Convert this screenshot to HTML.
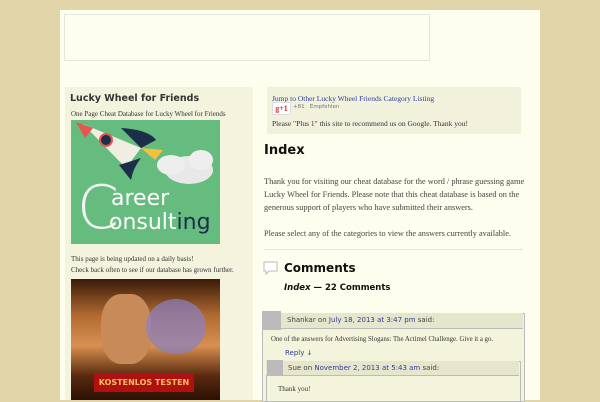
<!DOCTYPE html>
<html><head><style>
body{margin:0;width:600px;height:400px;overflow:hidden;background:#e3d5aa;font-family:"Liberation Serif",serif;}
#w{position:absolute;left:60px;top:10px;width:480px;height:390px;background:#fefeee;}
.a{position:absolute}
.sans{font-family:"DejaVu Sans","Liberation Sans",sans-serif}
a{color:#2c3fa0;text-decoration:none}
</style></head><body>
<div id="w"></div>
<div class="a" style="left:64px;top:14px;width:364px;height:45px;border:1px solid #e6e6dc;"></div>
<div class="a" style="left:65px;top:87px;width:188px;height:313px;background:#f3f3de;"></div>
<div class="a sans" style="left:70px;top:93px;font-size:9.5px;font-weight:bold;color:#333;">Lucky Wheel for Friends</div>
<div class="a" style="left:71px;top:110px;font-size:7px;color:#333;">One Page Cheat Database for Lucky Wheel for Friends</div>
<div class="a" style="left:71px;top:120px;width:149px;height:124px;background:#66bb7f;overflow:hidden;">
<svg width="149" height="124" viewBox="0 0 149 124">
<ellipse cx="118" cy="50" rx="24" ry="14" fill="#e8e8e8"/><ellipse cx="100" cy="45" rx="14" ry="10" fill="#eee"/><ellipse cx="130" cy="40" rx="12" ry="10" fill="#eee"/>
<path d="M12 4 L70 28 L55 48 Z" fill="#f0eee0"/><path d="M5 2 L22 8 L14 18Z" fill="#e85550"/>
<circle cx="35" cy="20" r="7" fill="#e85550"/><circle cx="35" cy="20" r="5" fill="#1b2f4a"/>
<path d="M50 8 Q78 10 85 20 L70 28Z" fill="#1b2f4a"/><path d="M48 45 L60 60 Q62 48 70 38Z" fill="#1b2f4a"/>
<path d="M70 28 L92 30 L84 40 Z" fill="#f5c040"/>
</svg>
<div class="a sans" style="left:6px;top:58px;font-size:60px;color:#f0f4ee;line-height:60px;font-weight:200;">C</div>
<div class="a sans" style="left:40px;top:66px;font-size:22px;color:#fff;">areer</div>
<div class="a sans" style="left:38px;top:90px;font-size:22px;color:#fff;">onsult<span style="color:#1b2f4a">ing</span></div>
</div>
<div class="a" style="left:71px;top:254px;font-size:7px;line-height:11px;color:#333;">This page is being updated on a daily basis!<br>Check back often to see if our database has grown further.</div>
<div class="a" style="left:71px;top:279px;width:149px;height:121px;background:linear-gradient(#3a1a08,#b06a30 30%,#d89050 55%,#5a2a10 80%,#2a1004);">
<div class="a" style="left:30px;top:15px;width:50px;height:70px;border-radius:40%;background:#c88a58;"></div>
<div class="a" style="left:75px;top:20px;width:60px;height:55px;border-radius:50%;background:#8a80c8;opacity:.7"></div>
<div class="a sans" style="left:23px;top:95px;width:100px;height:18px;background:#b01010;color:#f5c060;font-size:8px;line-height:18px;text-align:center;font-weight:bold;">KOSTENLOS TESTEN</div>
</div>
<div class="a" style="left:267px;top:87px;width:254px;height:47px;background:#f1f1dc;"></div>
<div class="a" style="left:272px;top:94px;font-size:7.5px;color:#2c3fa0;">Jump to Other Lucky Wheel Friends Category Listing</div>
<div class="a" style="left:272px;top:102px;width:17px;height:11px;background:#fff;border:1px solid #ddd;color:#d33;font-size:8px;font-weight:bold;text-align:center;line-height:11px;">g+1</div>
<div class="a sans" style="left:293px;top:104px;font-size:5.5px;color:#777;">+81 &nbsp; Empfehlen</div>
<div class="a" style="left:272px;top:119px;font-size:7.5px;color:#333;">Please "Plus 1" this site to recommend us on Google. Thank you!</div>
<div class="a sans" style="left:264px;top:143px;font-size:13px;font-weight:bold;color:#111;">Index</div>
<div class="a" style="left:264px;top:175px;width:262px;font-size:8.3px;line-height:13px;color:#444;">Thank you for visiting our cheat database for the word / phrase guessing game Lucky Wheel for Friends. Please note that this cheat database is based on the generous support of players who have submitted their answers.<br><br>Please select any of the categories to view the answers currently available.</div>
<div class="a" style="left:264px;top:249px;width:259px;height:1px;background:#e4e4d4;"></div>
<svg class="a" style="left:263px;top:261px" width="16" height="14"><path d="M1 1H14V10H6L3 13V10H1Z" fill="#fff" stroke="#bbb"/></svg>
<div class="a sans" style="left:284px;top:261px;font-size:12px;font-weight:bold;color:#111;">Comments</div>
<div class="a sans" style="left:284px;top:283px;font-size:8.5px;font-weight:bold;color:#111;"><i>Index</i> — 22 Comments</div>
<div class="a" style="left:262px;top:313px;width:261px;height:87px;background:#f4f4dc;border:1px solid #bbb;"></div>
<div class="a" style="left:262px;top:313px;width:261px;height:15px;background:#e6e6cc;border-bottom:1px solid #bbb;"></div>
<div class="a" style="left:262px;top:311px;width:19px;height:19px;background:#bbb;"></div>
<div class="a sans" style="left:287px;top:316px;font-size:7px;color:#444;">Shankar on <a>July 18, 2013 at 3:47 pm</a> said:</div>
<div class="a" style="left:271px;top:336px;font-size:6.8px;color:#333;">One of the answers for Advertising Slogans: The Actimel Challenge. Give it a go.</div>
<div class="a sans" style="left:285px;top:349px;font-size:7px;"><a>Reply ↓</a></div>
<div class="a" style="left:266px;top:361px;width:253px;height:39px;background:#f4f4dc;border:1px solid #bbb;"></div>
<div class="a" style="left:266px;top:361px;width:253px;height:14px;background:#e6e6cc;border-bottom:1px solid #bbb;"></div>
<div class="a" style="left:267px;top:360px;width:16px;height:16px;background:#bbb;"></div>
<div class="a sans" style="left:288px;top:364px;font-size:7px;color:#444;">Sue on <a>November 2, 2013 at 5:43 am</a> said:</div>
<div class="a" style="left:278px;top:385px;font-size:7px;color:#333;">Thank you!</div>
</body></html>
